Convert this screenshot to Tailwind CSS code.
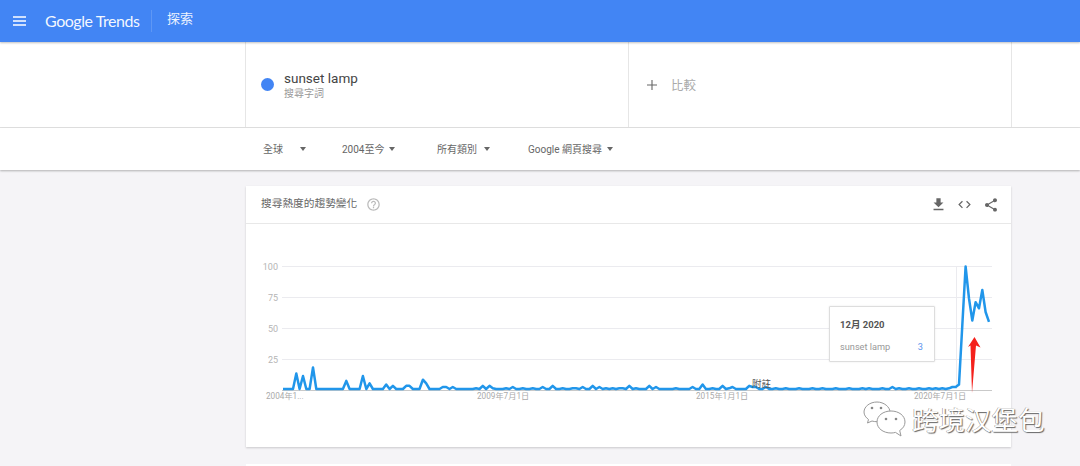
<!DOCTYPE html>
<html lang="zh-Hant">
<head>
  <meta charset="UTF-8">
  <title>Google Trends</title>
  <script src="https://cdn.jsdelivr.net/npm/@tailwindcss/browser@4"></script>
</head>
<body class="h-[466px] overflow-hidden bg-[#f5f4f7] font-['Roboto','Noto_Sans_CJK_TC',sans-serif] text-[#666]">
  <!-- Header -->
  <header class="relative z-20 flex h-[42px] items-center bg-[#4285f4] shadow-[0_1px_2px_rgba(0,0,0,0.25)]">
    <svg class="ml-[13px] h-[10px] w-[13px]" viewBox="0 0 13 10" fill="none" stroke="#fff" stroke-width="1.4"><path d="M0 1h13M0 5h13M0 9h13"/></svg>
    <span class="ml-[19px] w-[94px] whitespace-nowrap font-['Lato'] text-[16px] leading-none tracking-[-0.45px] text-white/95">Google Trends</span>
    <div class="ml-[12px] h-[22px] w-px bg-white/15"></div>
    <span class="ml-[15px] -mt-[4px] text-[13px] text-white/90">探索</span>
  </header>

  <!-- Search terms -->
  <section class="flex h-[86px] border-b border-[#e2e2e2] bg-white pl-[245px]">
    <div class="flex w-[384px] items-center border-x border-[#e6e6e6] pl-[15px]">
      <span class="h-[13px] w-[13px] rounded-full bg-[#4285f4]"></span>
      <div class="ml-[10px]">
        <p class="text-[13.500px] leading-[17px] text-[#444]">sunset lamp</p>
        <p class="text-[10px] leading-[13px] text-[#999]">搜尋字詞</p>
      </div>
    </div>
    <div class="flex w-[383px] items-center border-r border-[#e6e6e6] pl-[18px]">
      <svg class="mt-[1px] h-[10px] w-[10px]" viewBox="0 0 10 10" stroke="#666" stroke-width="1.1"><path d="M5 0v10M0 5h10"/></svg>
      <span class="ml-[14px] mt-[4px] text-[12.5px] text-[#aaa]">比較</span>
    </div>
  </section>

  <!-- Filters -->
  <section class="relative z-10 flex h-[42px] items-center bg-white pl-[263px] text-[10px] shadow-[0_1px_2px_rgba(0,0,0,0.28)]">
    <span class="w-[37px]">全球</span>
    <span class="h-0 w-0 border-x-[3.5px] border-t-[4px] border-x-transparent border-t-[#666]"></span>
    <span class="ml-[36px] w-[47px]">2004至今</span>
    <span class="h-0 w-0 border-x-[3.5px] border-t-[4px] border-x-transparent border-t-[#666]"></span>
    <span class="ml-[42px] w-[47px]">所有類別</span>
    <span class="h-0 w-0 border-x-[3.5px] border-t-[4px] border-x-transparent border-t-[#666]"></span>
    <span class="ml-[38px] w-[79px] whitespace-nowrap">Google 網頁搜尋</span>
    <span class="h-0 w-0 border-x-[3.5px] border-t-[4px] border-x-transparent border-t-[#666]"></span>
  </section>

  <!-- Trend card -->
  <main class="ml-[246px] mt-[16px] w-[765px]">
    <article class="relative h-[261px] bg-white shadow-[0_1px_2px_rgba(0,0,0,0.18)]">
      <div class="flex h-[38px] items-center border-b border-[#e8e8e8] pl-[15px]">
        <h2 class="w-[105px] whitespace-nowrap text-[10.7px] font-normal text-[#666]">搜尋熱度的趨勢變化</h2>
        <svg class="h-[15px] w-[15px]" viewBox="0 0 24 24" fill="#bbb"><path d="M11 18h2v-2h-2v2zm1-16C6.48 2 2 6.48 2 12s4.48 10 10 10 10-4.48 10-10S17.52 2 12 2zm0 18c-4.41 0-8-3.59-8-8s3.59-8 8-8 8 3.59 8 8-3.59 8-8 8zm0-14c-2.21 0-4 1.79-4 4h2c0-1.1.9-2 2-2s2 .9 2 2c0 2-3 1.75-3 5h2c0-2.25 3-2.5 3-5 0-2.21-1.79-4-4-4z"/></svg>
        <div class="ml-auto mr-[12px] flex items-center">
          <svg class="h-[17px] w-[17px]" viewBox="0 0 24 24" fill="#666"><path d="M19 9h-4V3H9v6H5l7 7 7-7zM5 18v2h14v-2H5z"/></svg>
          <svg class="ml-[10px] h-[15px] w-[15px]" viewBox="0 0 24 24" fill="#666"><path d="M9.4 16.6 4.8 12l4.6-4.6L8 6l-6 6 6 6 1.4-1.400zm5.2 0 4.600-4.600-4.600-4.600L16 6l6 6-6 6-1.400-1.400z"/></svg>
          <svg class="ml-[11px] h-[16px] w-[16px]" viewBox="0 0 24 24" fill="#666"><path d="M18 16.08c-.76 0-1.44.3-1.96.77L8.91 12.7c.05-.23.09-.46.09-.7s-.04-.47-.09-.7l7.05-4.11c.54.5 1.25.81 2.04.81 1.66 0 3-1.34 3-3s-1.34-3-3-3-3 1.34-3 3c0 .24.04.47.09.7L8.04 9.81C7.5 9.31 6.79 9 6 9c-1.66 0-3 1.34-3 3s1.34 3 3 3c.79 0 1.5-.31 2.04-.81l7.12 4.16c-.05.21-.08.43-.08.65 0 1.61 1.31 2.92 2.92 2.92s2.92-1.31 2.92-2.92-1.31-2.92-2.92-2.92z"/></svg>
        </div>
      </div>

      <svg class="block" width="765" height="223" viewBox="246 224 765 223">
        <g stroke="#ebebef" stroke-width="1">
          <path d="M282 266.500h710M282 297.500h710M282 328.500h710M282 359.500h710"/>
          <path d="M956.500 266v123"/>
        </g>
        <path d="M282 390.500h710" stroke="#c9c9c9"/>
        <g fill="#b5b5b5" font-size="9" text-anchor="end">
          <text x="278" y="270">100</text>
          <text x="278" y="301">75</text>
          <text x="278" y="332">50</text>
          <text x="278" y="363">25</text>
        </g>
        <g fill="#aaa" font-size="8.2">
          <text x="266" y="399">2004年1...</text>
          <text x="477" y="399">2009年7月1日</text>
          <text x="696" y="399">2015年1月1日</text>
          <text x="914" y="399">2020年7月1日</text>
        </g>
        <polyline id="trend" fill="none" stroke="#2196ea" stroke-width="2.5" stroke-linejoin="round"/>
        <text x="752" y="387" font-size="9.5" fill="#555">附註</text>
        <path d="M974.500 337l6 10.500-4.500-2L972 393l-1.500-47.500-2.500 1.500z" fill="#f4211c"/>
      </svg>

      <!-- Tooltip -->
      <div class="absolute left-[583px] top-[120px] h-[56px] w-[106px] rounded-[1px] border border-[#ddd] bg-white px-[10px] pt-[12px] shadow-[0_0_2px_rgba(0,0,0,0.1)]">
        <p class="text-[9.5px] font-bold leading-[12px] text-[#555]">12月 2020</p>
        <p class="mt-[10px] flex justify-between pr-[1px] text-[9.2px] leading-[12px] text-[#999]"><span>sunset lamp</span><span class="text-[#5b95ee]">3</span></p>
      </div>
    </article>
    <div class="mt-[17px] h-[2px] bg-white"></div>
  </main>

  <!-- Watermark -->
  <div class="absolute left-[863px] top-[401px] z-30 flex items-center">
    <svg class="h-[36px] w-[44px]" viewBox="0 0 44 36" fill="#fff" stroke="#999" stroke-width="1">
      <path d="M14 1C7 1 1 5.500 1 11c0 3 1.800 5.500 4.500 7.500L4.500 22l4.500-2c1.500.4 3 .7 5 .7C20 20.700 27 16 27 11S21 1 14 1z"/>
      <path d="M28 10c-8 0-14 4.800-14 11s6 11 14 11c1.600 0 3-.2 4.500-.6L38 35l-1.300-5.500C40 27.500 42 24.500 42 21c0-6.200-6-11-14-11z"/>
      <circle cx="9" cy="7" r="1.300" fill="#888" stroke="none"/>
      <circle cx="18" cy="7" r="1.300" fill="#888" stroke="none"/>
      <circle cx="23" cy="18" r="1.300" fill="#888" stroke="none"/>
      <circle cx="33" cy="18" r="1.300" fill="#888" stroke="none"/>
    </svg>
    <span class="ml-[5px] whitespace-nowrap font-['Noto_Sans_CJK_SC'] text-[26.500px] leading-none text-white [text-shadow:1px_1px_1px_#666,-0.5px_-0.5px_0.5px_#888]">跨境汉堡包</span>
  </div>

  <script>
    // monthly values, mostly a flat line near zero with the 2020 spike at the end
    const values = Array(213).fill(0.4);
    const peaks = {4:13,6:11,9:18,19:7,24:11,26:5,31:4,33:3,37:3,38:3,42:8,43:5,48:2,49:2,51:2,58:1,60:3,62:3,63:1,67:1,69:2,
      72:1,75:1,78:2,81:3,84:1,87:1,88:1,90:2,93:3,95:2,97:1,99:1,101:1,102:1,104:3,106:1,110:3,112:2,118:1,123:2,126:4,129:1,132:3,134:1,135:2,
      140:3,141:2,142:2,145:2,148:1,151:1,155:1,159:1,162:1,166:1,170:1,174:1,176:1,180:1,183:2,185:1,188:1,191:1,194:1,196:1,198:1,200:1,201:2,202:2,
      203:4,204:52,205:100,206:74,207:56,208:71,209:66,210:81,211:63,212:55};
    for (const i in peaks) values[i] = peaks[i];
    const points = values.map((v, i) => (283 + i * 3.33).toFixed(1) + ',' + (389.5 - v * 1.23).toFixed(1));
    document.getElementById('trend').setAttribute('points', points.join(' '));
  </script>
</body>
</html>
